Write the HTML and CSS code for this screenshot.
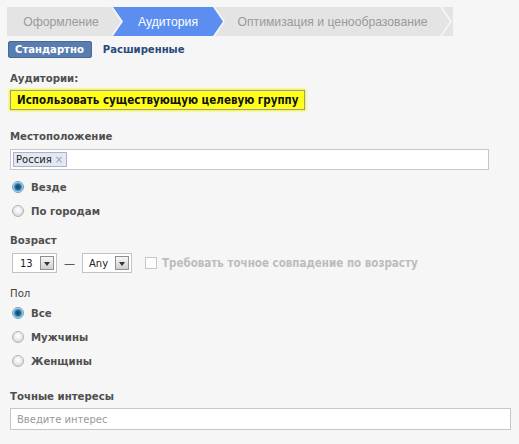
FILE: index.html
```html
<!DOCTYPE html>
<html>
<head>
<meta charset="utf-8">
<link rel="stylesheet" href="styles.css">
</head>
<body>
<div class="page">
  <nav class="tabs">
    <div class="tab tab-first">Оформление</div>
    <div class="tab tab-active">Аудитория</div>
    <div class="tab tab-wide">Оптимизация и ценообразование</div>
    <div class="tab tab-end"></div>
  </nav>

  <div class="modes">
    <span class="mode mode-on">Стандартно</span>
    <span class="mode mode-off">Расширенные</span>
  </div>

  <div class="label label-aud">Аудитории:</div>
  <div class="hl-wrap"><div class="hl">Использовать существующую целевую группу</div></div>

  <div class="label label-loc">Местоположение</div>
  <div class="field field-loc">
    <span class="token">Россия <span class="token-x">×</span></span>
  </div>
  <div class="radios radios-loc">
    <div class="radio-row"><span class="radio checked"></span><span class="rlabel">Везде</span></div>
    <div class="radio-row"><span class="radio"></span><span class="rlabel">По городам</span></div>
  </div>

  <div class="label label-age">Возраст</div>
  <div class="age-row">
    <div class="select sel-from"><span class="sel-val">13</span><span class="sel-btn"><span class="tri"></span></span></div>
    <span class="dash">—</span>
    <div class="select sel-to"><span class="sel-val">Any</span><span class="sel-btn"><span class="tri"></span></span></div>
    <span class="check"></span>
    <span class="check-label">Требовать точное совпадение по возрасту</span>
  </div>

  <div class="label label-sex">Пол</div>
  <div class="radios radios-sex">
    <div class="radio-row"><span class="radio checked"></span><span class="rlabel">Все</span></div>
    <div class="radio-row"><span class="radio"></span><span class="rlabel">Мужчины</span></div>
    <div class="radio-row"><span class="radio"></span><span class="rlabel">Женщины</span></div>
  </div>

  <div class="label label-int">Точные интересы</div>
  <div class="field field-int"><span class="placeholder">Введите интерес</span></div>
</div>
</body>
</html>
```

FILE: styles.css
```css
html, body {
  margin: 0;
  padding: 0;
}
body {
  background: #f6f6f6;
  font-family: "DejaVu Sans", sans-serif;
  font-size: 11px;
  color: #555;
}
.page {
  padding: 7px 0 0 10px;
}

/* tabs */
.tabs {
  display: flex;
  height: 29px;
  width: 446px;
  margin-left: -3px;
  font-family: "Liberation Sans", Arial, sans-serif;
  font-size: 12.2px;
}
.tab {
  display: flex;
  align-items: center;
  justify-content: center;
  background: #e4e4e4;
  color: #9a9a9a;
  margin-left: -8px;
  flex: none;
  clip-path: polygon(0 0, calc(100% - 10px) 0, 100% 50%, calc(100% - 10px) 100%, 0 100%, 10px 50%);
}
.tab-first {
  width: 114px;
  margin-left: 0;
  padding-right: 6px;
  box-sizing: border-box;
  clip-path: polygon(0 0, calc(100% - 10px) 0, 100% 50%, calc(100% - 10px) 100%, 0 100%);
}
.tab-active {
  width: 110px;
  background: #5b8ef0;
  color: #fff;
}
.tab-wide {
  width: 235px;
}
.tab-end {
  width: 11px;
  clip-path: polygon(0 0, 100% 0, 100% 100%, 0 100%, 10px 50%);
}

/* mode switch */
.modes {
  margin-top: 5px;
  margin-left: -2px;
  height: 17px;
  display: flex;
  align-items: center;
  font-family: "DejaVu Sans Condensed", "DejaVu Sans", sans-serif;
  font-size: 11.2px;
  font-weight: bold;
}
.mode-on {
  box-sizing: border-box;
  height: 17px;
  line-height: 15px;
  padding: 0 7px 0 6px;
  background: #5a7db0;
  border: 1px solid #46699c;
  border-radius: 2px;
  color: #fff;
}
.mode-off {
  margin-left: 11px;
  color: #2b4a7c;
}

/* labels */
.label {
  font-family: "DejaVu Sans Condensed", "DejaVu Sans", sans-serif;
  font-size: 11.3px;
  font-weight: bold;
  line-height: 16px;
  color: #4f4f4f;
}
.label-aud { margin-top: 13px; }
.label-loc { margin-top: 19px; }
.label-age { margin-top: 10px; }
.label-sex { margin-top: 13px; font-weight: normal; color: #444; }
.label-int { margin-top: 16px; }

/* highlighted audience */
.hl-wrap {
  margin-top: 3px;
}
.hl {
  display: inline-block;
  box-sizing: border-box;
  height: 20px;
  line-height: 18px;
  padding: 0 6px;
  border: 1px solid #9a9a9a;
  background: #ffff1a;
  box-shadow: 0 0 2px 1px #f4f42a;
  color: #111;
  font-family: "DejaVu Sans Condensed", "DejaVu Sans", sans-serif;
  font-weight: bold;
  font-size: 11.5px;
}

/* fields */
.field {
  box-sizing: border-box;
  background: #fff;
  border: 1px solid #c6c6c6;
  display: flex;
  align-items: center;
}
.field-loc {
  margin-top: 4px;
  width: 479px;
  height: 21px;
  padding-left: 2px;
}
.token {
  box-sizing: border-box;
  height: 15px;
  line-height: 13px;
  padding: 0 3px 0 2px;
  background: #e3e8f2;
  border: 1px solid #a9b4c8;
  color: #222;
  font-size: 10px;
}
.token-x {
  color: #9aa3b5;
  font-size: 10px;
}
.field-int {
  margin-top: 3px;
  width: 501px;
  height: 22px;
  padding-left: 6px;
}
.placeholder {
  color: #999;
  font-size: 10px;
}

/* radios */
.radios-loc { margin-top: 5px; }
.radios-sex { margin-top: -1px; }
.radio-row {
  height: 24px;
  display: flex;
  align-items: center;
  padding-left: 2px;
}
.radio {
  box-sizing: border-box;
  width: 12px;
  height: 12px;
  border-radius: 50%;
  border: 1px solid #b4b4b4;
  background: radial-gradient(circle at 50% 40%, #ffffff 0, #f0f0f0 3px, #d4d4d4 6px);
}
.radio.checked {
  border-color: #7d9cb5;
  background: radial-gradient(circle, #14445e 0, #1f5e80 2.2px, #3a9bd0 3.6px, #cfe6f4 5px);
}
.rlabel {
  margin-left: 7px;
  font-family: "DejaVu Sans Condensed", "DejaVu Sans", sans-serif;
  font-size: 11.3px;
  font-weight: bold;
  color: #505050;
}

/* age row */
.age-row {
  margin-top: 4px;
  margin-left: 2px;
  height: 20px;
  display: flex;
  align-items: center;
}
.select {
  box-sizing: border-box;
  height: 20px;
  background: #fff;
  border: 1px solid #c3c3c3;
  display: flex;
  align-items: center;
  justify-content: space-between;
  padding: 0 2px 0 7px;
  font-size: 10px;
  color: #222;
}
.sel-from { width: 45px; }
.sel-to { width: 50px; padding-left: 6px; }
.sel-btn {
  box-sizing: border-box;
  width: 14px;
  height: 14px;
  border: 1px solid #8f8f8f;
  background: linear-gradient(#f7f7f7, #cfcfcf);
  display: flex;
  align-items: center;
  justify-content: center;
}
.tri {
  width: 0;
  height: 0;
  border-left: 3px solid transparent;
  border-right: 3px solid transparent;
  border-top: 4px solid #333;
  margin-top: 2px;
}
.dash {
  width: 25px;
  text-align: center;
  color: #333;
  font-size: 11px;
}
.check {
  box-sizing: border-box;
  width: 12px;
  height: 12px;
  margin-left: 13px;
  border: 1px solid #c8c8c8;
  background: #fdfdfd;
}
.check-label {
  margin-left: 5px;
  font-family: "DejaVu Sans Condensed", "DejaVu Sans", sans-serif;
  font-size: 11.5px;
  font-weight: bold;
  color: #bcbcbc;
}
```
